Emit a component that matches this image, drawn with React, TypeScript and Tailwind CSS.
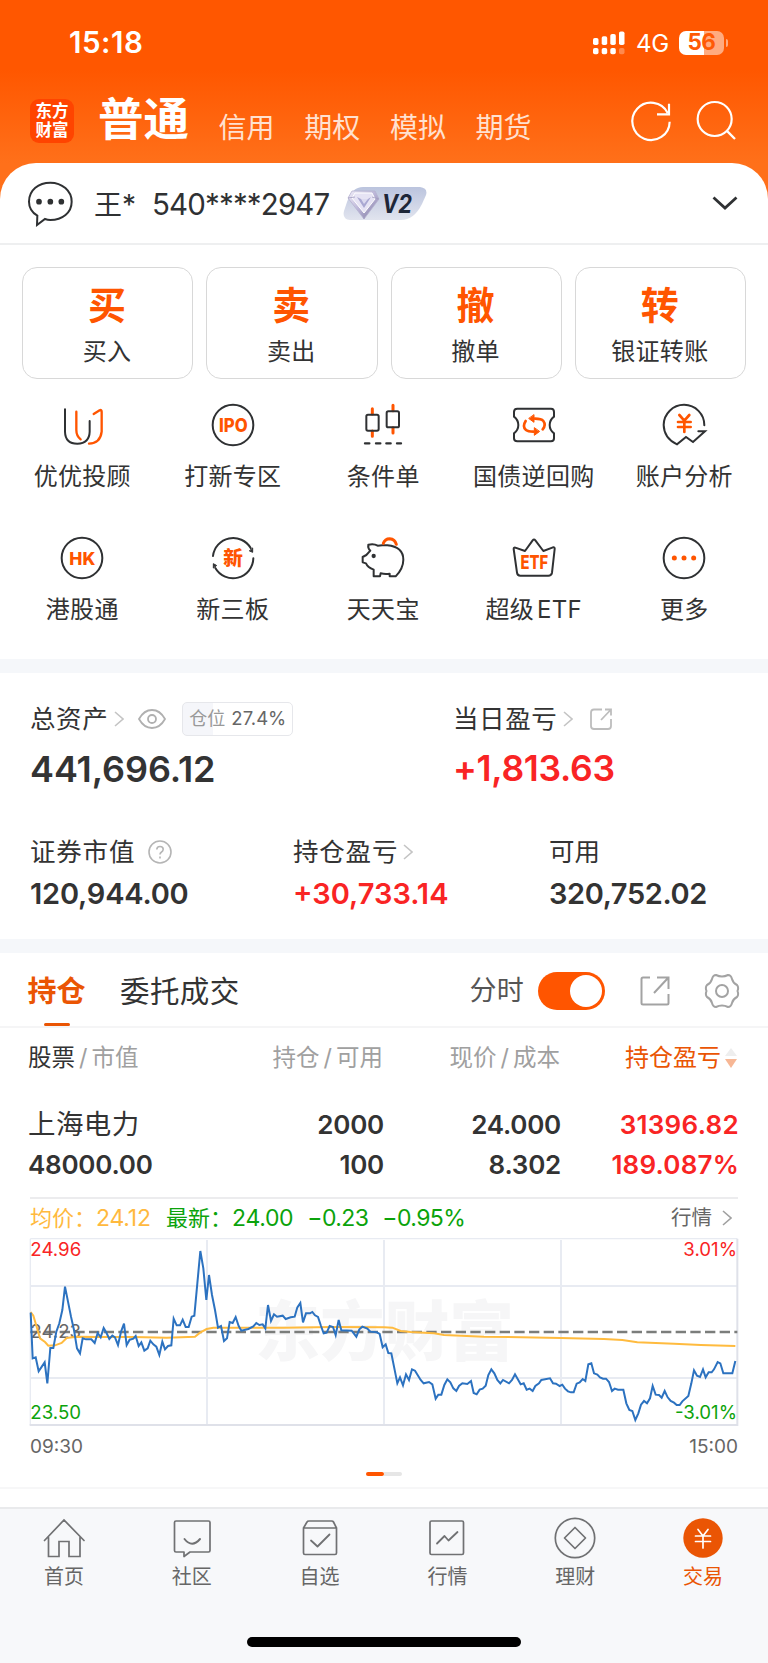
import React from "react";

const DARK = "#2f3133";
const ORANGE = "#ff5500";

type IconProps = { box: string; size?: string; children: React.ReactNode };

function Icon({ box, size = "size-12", children }: IconProps) {
  return (
    <svg
      viewBox={box}
      className={`${size} shrink-0`}
      fill="none"
      strokeLinecap="round"
      strokeLinejoin="round"
    >
      {children}
    </svg>
  );
}

function StatusBar() {
  return (
    <div className="flex h-[85px] items-center pl-[69px] pr-[40px] text-white">
      <span className="text-[29.5px] font-semibold leading-none tracking-[0.5px]">15:18</span>
      <div className="ml-auto flex items-center">
        <svg viewBox="0 0 32 24" className="h-6 w-8" fill="#fff">
          <rect x="0" y="7" width="5.5" height="7" rx="1.8" />
          <rect x="8.7" y="5.3" width="5.5" height="8.7" rx="1.8" />
          <rect x="17.3" y="3" width="5.5" height="11" rx="1.8" />
          <rect x="26" y="0.5" width="5.5" height="13.5" rx="1.8" />
          <rect x="0" y="17" width="5.5" height="6.3" rx="1.8" />
          <rect x="8.7" y="17" width="5.5" height="6.3" rx="1.8" />
          <rect x="17.3" y="17" width="5.5" height="6.3" rx="1.8" />
          <rect x="26" y="17" width="5.5" height="6.3" rx="1.8" opacity="0.3" />
        </svg>
        <span className="ml-[11px] w-[43px] pt-[2px] text-[24px] leading-none tracking-[-0.2px]">4G</span>
        <div className="flex h-6 w-[45px] items-center justify-center rounded-[7px] bg-[linear-gradient(90deg,#fff_56%,#ffab80_56%)]">
          <span className="text-[22.5px] font-bold leading-none tracking-[-0.4px] text-[#ff5a05]">56</span>
        </div>
        <div className="ml-[2px] h-[8px] w-[2px] rounded-r-full bg-[#ffab80]" />
      </div>
    </div>
  );
}

function HeaderTabs() {
  return (
    <div className="flex h-[78px] items-start pl-[30px] pr-[29px] text-white">
      <div className="mt-[14px] flex size-11 shrink-0 flex-col items-center justify-center gap-[2px] rounded-[9px] bg-[#ff4400] text-[16.5px] font-bold leading-none">
        <span className="block h-[17px]">东方</span>
        <span className="block h-[17px]">财富</span>
      </div>
      <div className="ml-[24px] mt-[12px] w-[120.5px] shrink-0 text-[45.5px] font-bold leading-none">普通</div>
      <div className="mt-[29px] flex gap-[29.7px] text-[28px] leading-none text-[#ffe1d0]">
        {["信用", "期权", "模拟", "期货"].map((t) => (
          <span key={t} className="shrink-0">
            {t}
          </span>
        ))}
      </div>
      <div className="ml-auto mt-[12px] flex gap-[16px]">
        <Icon box="730 290 144 144">
          <path
            d="M858 364A56 56 0 1 1 852 338M856 310V342H820"
            stroke="#fff"
            strokeWidth="6.5"
            strokeLinecap="butt"
            strokeLinejoin="miter"
          />
        </Icon>
        <Icon box="922 290 144 144">
          <circle cx="993" cy="356" r="51" stroke="#fff" strokeWidth="6.5" />
          <path d="M1029 391L1054 416" stroke="#fff" strokeWidth="7" strokeLinecap="butt" />
        </Icon>
      </div>
    </div>
  );
}

function AccountRow() {
  return (
    <div className="flex h-[82px] items-center border-b-2 border-[#eeeff0] pl-[26px] pr-[30px] text-[#2f3133]">
      <Icon box="78 537 144 144">
        <path
          d="M112 647Q87 632 87 605C87 570 116 548 151 548S215 572 215 605S187 660 151 660Q143 660 135 657L111 675Z"
          stroke={DARK}
          strokeWidth="6"
          strokeLinejoin="miter"
        />
        <g fill={DARK}>
          <circle cx="117" cy="605" r="8.5" />
          <circle cx="151" cy="605" r="8.5" />
          <circle cx="184" cy="605" r="8.5" />
        </g>
      </Icon>
      <span className="ml-[20px] w-[58px] pt-[4px] text-[28px] leading-none">王*</span>
      <span className="w-[191px] whitespace-nowrap pt-[3px] text-[29.5px] leading-none tracking-[-0.85px]">
        540****2947
      </span>
      <svg viewBox="0 0 84 36" className="h-9 w-[84px]">
        <defs>
          <linearGradient id="badge" x1="0" y1="0" x2="0" y2="1">
            <stop offset="0" stopColor="#bbc4de" />
            <stop offset="1" stopColor="#e1e4ee" />
          </linearGradient>
          <linearGradient id="gem" x1="0" y1="0" x2="1" y2="1">
            <stop offset="0" stopColor="#f2effa" />
            <stop offset="0.5" stopColor="#b9b3d6" />
            <stop offset="1" stopColor="#7c779c" />
          </linearGradient>
        </defs>
        <path
          d="M20 2H77Q85 3 83 10L79 19Q71 35 58 35H7Q-1 34 1 26L4 17Q9 2 20 2Z"
          fill="url(#badge)"
        />
        <path d="M9 6H32L36 14L21 34L5 13Z" fill="url(#gem)" stroke="#b5b1cf" strokeWidth="0.8" />
        <path d="M12 8H29L32 14L21 28L9 13Z" fill="#e6e3f4" stroke="#fff" strokeWidth="1" />
        <path d="M14 12L18 14H25L28 12L21 23Z" fill="#aaa8d2" />
        <path d="M18 14H25L21 19Z" fill="#dcdaf0" />
        <path d="M5 13L12 12M29 12L36 14M21 28V34" stroke="#a19cbf" strokeWidth="0.8" />
        <text
          x="39"
          y="27.5"
          fontFamily="Inter, sans-serif"
          fontSize="25"
          fontWeight="700"
          fontStyle="italic"
          fill="#1e2638"
          textLength="30"
          lengthAdjust="spacingAndGlyphs"
        >
          V2
        </text>
      </svg>
      <svg viewBox="0 0 26 14" className="ml-auto h-[14px] w-[26px]" fill="none">
        <path d="M1.5 1.5L13 12L24.5 1.5" stroke={DARK} strokeWidth="2.8" />
      </svg>
    </div>
  );
}

const actions = [
  ["买", "买入"],
  ["卖", "卖出"],
  ["撤", "撤单"],
  ["转", "银证转账"],
];

function ActionCards() {
  return (
    <div className="grid grid-cols-4 gap-[13px] px-[22px] pt-[22px]">
      {actions.map(([big, label]) => (
        <div
          key={big}
          className="flex h-[112px] flex-col items-center rounded-[15px] border border-[#d8d8d8] pr-px pt-[18px]"
        >
          <span className="text-[38px] font-bold leading-none text-[#ff5500]">{big}</span>
          <span className="mt-[16px] text-[24px] leading-none tracking-[0.3px] text-[#333]">{label}</span>
        </div>
      ))}
    </div>
  );
}

const iconText = {
  fill: ORANGE,
  fontFamily: "Inter, 'Noto Sans CJK SC', sans-serif",
  fontWeight: 800,
  textAnchor: "middle" as const,
};

const shortcuts = [
  {
    label: "优优投顾",
    icon: (
      <Icon box="177 453 144 144">
        <path d="M198 478V545Q199 581 235 581Q271 580 272 545V513" stroke={DARK} strokeWidth="6" />
        <path d="M232 485V540Q232 558 245 568" stroke={ORANGE} strokeWidth="7" />
        <path d="M284 492L302 481Q308 478 308 485V545Q304 580 270 581" stroke={ORANGE} strokeWidth="7" />
      </Icon>
    ),
  },
  {
    label: "打新专区",
    icon: (
      <Icon box="629 453 144 144">
        <circle cx="701" cy="525" r="61" stroke={DARK} strokeWidth="6" />
        <text x="702" y="545" fontSize="56" textLength="86" lengthAdjust="spacingAndGlyphs" {...iconText}>
          IPO
        </text>
      </Icon>
    ),
  },
  {
    label: "条件单",
    icon: (
      <Icon box="1080 453 144 144">
        <path d="M1120 476V492M1120 543V559M1182 466V482M1182 533V549" stroke={ORANGE} strokeWidth="9" />
        <rect x="1102" y="494" width="37" height="48" rx="5" stroke={DARK} strokeWidth="6" />
        <rect x="1163" y="484" width="37" height="48" rx="5" stroke={DARK} strokeWidth="6" />
        <path d="M1098 580H1111M1131 580H1144M1162 580H1175M1194 580H1206" stroke={DARK} strokeWidth="7" />
      </Icon>
    ),
  },
  {
    label: "国债逆回购",
    icon: (
      <Icon box="380 453 144 144">
        <path
          d="M402 476H503Q512 476 512 486V500Q499 510 499 525Q499 540 512 550V565Q512 574 503 574H402Q392 574 392 565V550Q405 540 405 525Q405 510 392 500V486Q392 476 402 476Z"
          stroke={DARK}
          strokeWidth="6"
        />
        <path d="M427 513Q416 530 428 540Q434 545 450 545M478 538Q489 525 480 513Q474 506 455 506" stroke={ORANGE} strokeWidth="8" />
        <path d="M453 534V556L468 545ZM452 495V517L437 506Z" fill={ORANGE} stroke={ORANGE} strokeWidth="3" />
      </Icon>
    ),
  },
  {
    label: "账户分析",
    icon: (
      <Icon box="831 453 144 144">
        <path
          d="M964 526A61 61 0 0 0 842 525Q843 565 882 583L909 561L930 576L966 544H946"
          stroke={DARK}
          strokeWidth="6"
          strokeLinejoin="miter"
        />
        <path d="M889 495L904 512L919 495M904 512V546M885 516H923M885 531H923" stroke={ORANGE} strokeWidth="8" />
      </Icon>
    ),
  },
  {
    label: "港股通",
    icon: (
      <Icon box="177 103 144 144">
        <circle cx="249" cy="175" r="61" stroke={DARK} strokeWidth="6" />
        <text x="250" y="196" fontSize="54" textLength="78" lengthAdjust="spacingAndGlyphs" {...iconText}>
          HK
        </text>
      </Icon>
    ),
  },
  {
    label: "新三板",
    icon: (
      <Icon box="629 103 144 144">
        <path d="M641 169A61 61 0 0 1 754 145M762 176A61 61 0 0 1 648 205" stroke={DARK} strokeWidth="6" />
        <path d="M760 146V158L751 154ZM642 204V192L651 197Z" fill={DARK} stroke={DARK} strokeWidth="3" />
        <text x="701" y="197" fontSize="59" {...iconText}>
          新
        </text>
      </Icon>
    ),
  },
  {
    label: "天天宝",
    icon: (
      <Icon box="1080 103 144 144">
        <path
          d="M1108 135Q1125 131 1136 138L1150 137H1165Q1213 142 1213 180Q1213 206 1190 230H1172V222Q1158 224 1145 221L1143 230H1124V210Q1106 203 1101 191L1091 188V172L1102 166L1114 153Q1106 146 1108 135Z"
          stroke={DARK}
          strokeWidth="6"
        />
        <circle cx="1124" cy="169" r="6.5" fill={DARK} />
        <path d="M1153 131Q1158 117 1172 117Q1188 118 1192 134" stroke={ORANGE} strokeWidth="9" />
      </Icon>
    ),
  },
  {
    label: "超级 ETF",
    icon: (
      <Icon box="380 103 144 144">
        <path
          d="M396 144L425 154L448 122Q452 117 456 122L480 154L509 143Q515 142 514 148L506 219Q504 228 495 228H411Q402 228 401 219L391 148Q391 143 396 144Z"
          stroke={DARK}
          strokeWidth="6"
        />
        <text x="453" y="207" fontSize="56" textLength="83" lengthAdjust="spacingAndGlyphs" {...iconText}>
          ETF
        </text>
      </Icon>
    ),
  },
  {
    label: "更多",
    icon: (
      <Icon box="831 103 144 144">
        <circle cx="903" cy="175" r="61" stroke={DARK} strokeWidth="6" />
        <g fill={ORANGE}>
          <circle cx="874" cy="175" r="7.5" />
          <circle cx="903" cy="175" r="7.5" />
          <circle cx="932" cy="175" r="7.5" />
        </g>
      </Icon>
    ),
  },
];

function Shortcuts() {
  return (
    <div className="grid h-[280px] auto-rows-[133px] grid-cols-5 pl-[7px] pr-[8.5px] pt-[22px]">
      {shortcuts.map((s) => (
        <div key={s.label} className="flex flex-col items-center">
          {s.icon}
          <span className="mt-[16px] whitespace-nowrap text-[24px] leading-none tracking-[0.3px] text-[#333] [word-spacing:-4px]">
            {s.label}
          </span>
        </div>
      ))}
    </div>
  );
}

function Arrow({ color = "#c4c4c4" }: { color?: string }) {
  return (
    <svg viewBox="0 0 10 16" className="h-4 w-[10px] shrink-0" fill="none">
      <path d="M1 1L9 8L1 15" stroke={color} strokeWidth="1.6" />
    </svg>
  );
}

function Assets() {
  return (
    <div className="h-[266px] pl-[30px] pt-[28px] text-[#333]">
      <div className="flex">
        <div className="w-[423px]">
          <div className="flex h-[35px] items-center">
            <span className="text-[25.5px] leading-none tracking-[0.6px]">总资产</span>
            <span className="ml-[6px] flex">
              <Arrow />
            </span>
            <svg viewBox="0 0 28 20" className="ml-[14px] h-5 w-7" fill="none" stroke="#b0b0b0" strokeWidth="1.8">
              <path d="M1 10Q6 1 14 1T27 10Q22 19 14 19T1 10Z" />
              <circle cx="14" cy="10" r="4" />
            </svg>
            <div className="ml-[16px] flex h-[34px] w-[111px] items-center justify-center rounded-[5px] border border-[#e6e7eb] bg-[linear-gradient(90deg,#f5f6fa_27.4%,#fff_27.4%)] leading-none">
              <span className="text-[18px] text-[#999]">仓位</span>
              <span className="ml-[6px] text-[18.5px] text-[#666]">27.4%</span>
            </div>
          </div>
          <div className="mt-[15px] text-[36px] font-semibold leading-[36px] tracking-[-0.1px]">441,696.12</div>
        </div>
        <div>
          <div className="flex h-[35px] items-center">
            <span className="text-[25.5px] leading-none tracking-[0.6px]">当日盈亏</span>
            <span className="ml-[6px] flex">
              <Arrow />
            </span>
            <svg
              viewBox="0 0 22 22"
              className="ml-[17px] size-[22px]"
              fill="none"
              stroke="#bdbdbd"
              strokeWidth="1.8"
            >
              <path d="M12 1.5H4Q1 1.5 1 4.5V18Q1 21 4 21H18Q21 21 21 18V11M11 12L21 1.5M15 1.5H21V7.5" />
            </svg>
          </div>
          <div className="mt-[15px] text-[35.5px] font-semibold leading-[36px] tracking-[-0.3px] text-[#f92424]">
            +1,813.63
          </div>
        </div>
      </div>
      <div className="mt-[49px] flex">
        <div className="w-[263px]">
          <div className="flex h-[32px] items-center">
            <span className="text-[25.5px] leading-none tracking-[0.8px]">证券市值</span>
            <svg viewBox="0 0 24 24" className="ml-[13px] size-6" fill="none" stroke="#b5b5b5" strokeWidth="1.6">
              <circle cx="12" cy="12" r="11" />
              <path d="M8.8 9.5Q8.8 6.5 12 6.5T15.2 9.3Q15.2 11 13.3 12.2Q12 13 12 14.5M12 16.6V18.4" />
            </svg>
          </div>
          <div className="mt-[11px] text-[29px] font-semibold leading-[30px] tracking-[-0.2px]">120,944.00</div>
        </div>
        <div className="w-[256px]">
          <div className="flex h-[32px] items-center">
            <span className="text-[25.5px] leading-none tracking-[0.8px]">持仓盈亏</span>
            <span className="ml-[5px] flex">
              <Arrow />
            </span>
          </div>
          <div className="mt-[11px] text-[29px] font-semibold leading-[30px] text-[#f92424]">+30,733.14</div>
        </div>
        <div>
          <div className="flex h-[32px] items-center text-[25.5px] leading-none">可用</div>
          <div className="mt-[11px] text-[29px] font-semibold leading-[30px] tracking-[-0.4px]">320,752.02</div>
        </div>
      </div>
    </div>
  );
}

function PositionTabs() {
  return (
    <div className="flex h-[75px] border-b-2 border-[#f5f5f6] pl-[27px] pr-[28.5px]">
      <div className="flex w-[59px] flex-col items-center pt-[24px]">
        <span className="text-[29px] font-bold leading-none text-[#ea5504]">持仓</span>
        <span className="mt-[16.5px] h-[5px] w-[26px] rounded-[2px] bg-[#ea5504]" />
      </div>
      <span className="ml-[34px] pt-[24px] text-[29.5px] leading-none tracking-[0.4px] text-[#333]">委托成交</span>
      <div className="ml-auto flex h-[75px] items-center">
        <span className="text-[27px] leading-none tracking-[0.2px] text-[#555]">分时</span>
        <div className="ml-[14px] flex h-[38px] w-[67px] items-center justify-end rounded-full bg-[#ff5500] pr-[3px]">
          <div className="size-[32px] rounded-full bg-white" />
        </div>
        <svg viewBox="0 0 30 30" className="ml-[35px] size-[30px]" fill="none" stroke="#a3a3a3" strokeWidth="2">
          <path d="M10 1.5H3Q1.5 1.5 1.5 3V27Q1.5 28.5 3 28.5H27Q28.5 28.5 28.5 27V18M14 17L28 2M17 1.5H28.5V13" />
        </svg>
        <svg
          viewBox="0 0 36 36"
          className="ml-[33.5px] size-[36px]"
          fill="none"
          stroke="#a3a3a3"
          strokeWidth="2"
          strokeLinejoin="round"
        >
          <path d="M12 2Q18 5 24 2Q27 2 28 6Q29 10 33 12Q35 14 33.5 18Q35 22 33 24Q29 26 28 30Q27 34 24 34Q18 31 12 34Q9 34 8 30Q7 26 3 24Q1 22 2.5 18Q1 14 3 12Q7 10 8 6Q9 2 12 2Z" />
          <circle cx="18" cy="18" r="6" />
        </svg>
      </div>
    </div>
  );
}

function Positions() {
  return (
    <div className="px-[28px]">
      <div className="grid h-[60px] grid-cols-[160px_195px_177px_1fr] items-center text-right text-[23.5px] leading-none text-[#a0a0a0]">
        <span className="text-left">
          <span className="text-[#333]">股票</span>
          <span className="px-[4px]">/</span>市值
        </span>
        <span>
          持仓<span className="px-[4px]">/</span>可用
        </span>
        <span>
          现价<span className="px-[4px]">/</span>成本
        </span>
        <span className="flex items-center justify-end text-[24px] text-[#ea5504]">
          持仓盈亏
          <svg viewBox="0 0 14 20" className="ml-[3px] mr-[2px] h-5 w-[14px]">
            <path d="M7 0L13 8H1Z" fill="#eeeeee" />
            <path d="M7 20L13 11H1Z" fill="#f7b795" />
          </svg>
        </span>
      </div>
      <div className="grid h-[109px] grid-cols-[160px_196px_177px_1fr] auto-rows-[40px] items-center pt-[17px] text-right text-[26px] font-semibold leading-none tracking-[-0.25px] text-[#333]">
        <span className="text-left text-[27.5px] font-normal tracking-[0.4px]">上海电力</span>
        <span>2000</span>
        <span>24.000</span>
        <span className="pr-px tracking-[0.3px] text-[#f92424]">31396.82</span>
        <span className="text-left">48000.00</span>
        <span>100</span>
        <span>8.302</span>
        <span className="pr-px tracking-[0.2px] text-[#f92424]">189.087%</span>
      </div>
    </div>
  );
}

const priceLine =
  "92,368 98,505 107,502 116,544 134,517 142,580 151,474 160,474 169,425 178,400 187,360 195,290 204,335 213,380 222,420 231,475 240,490 248,445 258,448 274,448 284,459 293,429 302,442 311,414 320,430 328,447 337,437 345,442 354,465 363,425 372,401 380,465 389,449 400,446 407,438 416,468 424,457 433,482 443,475 451,452 460,463 469,470 478,495 487,455 495,478 504,468 514,466 521,386 530,406 540,406 548,389 557,411 566,411 575,380 583,377 592,280 601,183 610,235 619,330 627,255 636,315 645,360 654,413 663,408 672,453 681,445 689,396 698,399 707,381 716,408 724,422 745,417 760,409 769,399 778,405 788,403 796,415 804,345 813,393 822,373 831,380 848,377 857,387 872,382 884,380 892,352 901,339 909,397 918,370 930,370 937,366 945,376 954,381 963,408 971,430 980,428 989,408 999,411 1007,435 1016,390 1024,421 1055,422 1069,440 1078,418 1087,410 1102,416 1111,425 1130,427 1139,432 1148,472 1157,463 1165,489 1174,490 1182,530 1192,580 1200,562 1209,586 1218,553 1227,570 1236,538 1245,542 1262,570 1271,580 1287,576 1297,583 1307,626 1315,614 1324,614 1333,585 1342,568 1351,577 1360,595 1369,603 1377,588 1387,580 1402,582 1413,573 1421,609 1430,613 1439,599 1448,596 1457,587 1465,555 1474,538 1483,550 1492,570 1501,580 1509,570 1527,580 1536,570 1545,553 1562,583 1571,580 1580,599 1589,596 1598,603 1606,588 1617,580 1624,570 1650,565 1659,580 1668,581 1679,588 1687,584 1695,596 1704,604 1713,607 1721,607 1730,581 1739,577 1748,567 1756,573 1765,523 1774,520 1782,550 1792,554 1800,562 1809,566 1818,566 1827,576 1836,603 1844,596 1854,599 1870,599 1879,640 1888,660 1897,663 1906,690 1915,670 1923,644 1932,633 1941,640 1950,625 1958,588 1967,614 1977,615 1985,623 1994,603 2003,622 2012,633 2022,638 2030,645 2039,645 2047,634 2065,618 2074,580 2082,541 2091,557 2100,561 2109,538 2117,562 2126,547 2135,547 2142,538 2153,516 2161,520 2170,550 2197,550 2206,513";

const averageLine =
  "92,366 100,377 110,410 120,445 135,456 145,467 165,466 185,459 200,444 230,440 300,441 400,441 500,443 585,440 600,428 620,417 640,413 700,413 850,413 1000,411 1152,412 1177,413 1202,423 1232,426 1302,430 1332,435 1452,440 1682,444 1812,447 1867,450 1912,457 2022,461 2102,465 2206,468";

function IntradayChart() {
  return (
    <div className="flex h-[290px] flex-col px-[28px]">
      <div className="mx-[2px] flex h-[40px] items-center border-t-2 border-[#ececee] text-[23px] leading-none tracking-[-0.6px]">
        <span className="w-[136px] text-[#ffb93e]">
          <span className="text-[22px] tracking-normal">均价：</span>
          <span className="tracking-[-0.2px]">24.12</span>
        </span>
        <span className="text-[#0ba30b]">
          <span className="text-[22px] tracking-normal">最新：</span>
          <span className="tracking-[-0.3px]">24.00</span>
        </span>
        <span className="ml-[14px] text-[#0ba30b]">−0.23</span>
        <span className="ml-[14px] text-[#0ba30b]">−0.95%</span>
        <span className="ml-auto mr-[10px] text-[20.5px] tracking-normal text-[#666]">行情</span>
        <span className="mr-[6px] flex">
          <Arrow color="#a0a0a0" />
        </span>
      </div>
      <svg
        viewBox="84 141 2136 573"
        className="h-[191px] w-[712px] shrink-0"
        fill="none"
        fontFamily="Inter, 'Noto Sans CJK SC', sans-serif"
        fontSize="56"
      >
        <text x="766" y="496" fontSize="194" fontWeight="900" fill="#f6f6f7">
          东方财富
        </text>
        <g stroke="#e8ebf2" strokeWidth="6">
          <path d="M91 288H2212M91 564H2212M621 150V704M1152 150V704M1683 150V704" />
          <path d="M91 146V705M91 146H2212" strokeWidth="4" />
          <path d="M2212 146V705H89" stroke="#dfe1e9" />
        </g>
        <path d="M91 426H2212" stroke="#7b7d7b" strokeWidth="7" strokeDasharray="31 13" />
        <text x="91" y="444" fill="#666">
          24.23
        </text>
        <polyline points={averageLine} stroke="#ffbb3f" strokeWidth="6" />
        <polyline points={priceLine} stroke="#2c72c0" strokeWidth="6" />
        <text x="91" y="199" fill="#f92424">
          24.96
        </text>
        <text x="91" y="687" fill="#0ba30b">
          23.50
        </text>
        <text x="2211" y="199" textAnchor="end" fill="#f92424">
          3.01%
        </text>
        <text x="2211" y="687" textAnchor="end" fill="#0ba30b">
          -3.01%
        </text>
      </svg>
      <div className="mx-[2px] flex h-[37px] items-center justify-between text-[19px] leading-none text-[#666]">
        <span>09:30</span>
        <span>15:00</span>
      </div>
      <div className="mt-[7px] flex justify-center">
        <span className="h-[4px] w-[18px] rounded-full bg-[#ff5500]" />
        <span className="h-[4px] w-[18px] rounded-r-full bg-[#e6e6e6]" />
      </div>
    </div>
  );
}

const navIcon = "#707173";

const navItems = [
  {
    label: "首页",
    icon: (
      <Icon box="40 1513.5 48 48">
        <path
          d="M44.5 1540L64 1519.5L84 1540M48.5 1537V1556H59V1541H69V1556H80V1537"
          stroke={navIcon}
          strokeWidth="1.7"
          strokeLinejoin="miter"
        />
      </Icon>
    ),
  },
  {
    label: "社区",
    icon: (
      <Icon box="168 1513.5 48 48">
        <path
          d="M176 1520.5H208.5Q210 1520.5 210 1522V1550Q210 1551.5 208.5 1551.5H190L184 1556V1551.5H176Q174.5 1551.5 174.5 1550V1522Q174.5 1520.5 176 1520.5Z"
          stroke={navIcon}
          strokeWidth="1.7"
        />
        <path d="M184.5 1538.5Q192 1548 200 1538.5" stroke={navIcon} strokeWidth="2" />
      </Icon>
    ),
  },
  {
    label: "自选",
    icon: (
      <Icon box="296 1513.5 48 48">
        <path
          d="M303.5 1527.5L307 1521.5Q307.5 1520.5 309 1520.5H331.5Q333 1520.5 333.5 1521.5L336.5 1527.5M303.5 1527.5H336.5V1552.5Q336.5 1554 335 1554H305Q303.5 1554 303.5 1552.5Z"
          stroke={navIcon}
          strokeWidth="1.7"
        />
        <path d="M311 1540L317.5 1546L329.5 1534" stroke={navIcon} strokeWidth="1.8" />
      </Icon>
    ),
  },
  {
    label: "行情",
    icon: (
      <Icon box="424 1513.5 48 48">
        <rect x="431" y="1520.5" width="33.5" height="33.5" rx="1.5" stroke={navIcon} strokeWidth="1.7" />
        <path d="M438 1543L445.5 1535.5L449.5 1540L458.5 1531.5" stroke={navIcon} strokeWidth="1.8" />
      </Icon>
    ),
  },
  {
    label: "理财",
    icon: (
      <Icon box="552 1513.5 48 48">
        <circle cx="576" cy="1537.5" r="19.7" stroke={navIcon} strokeWidth="1.7" />
        <path d="M576 1527L586.5 1537.5L576 1548L565.5 1537.5Z" stroke={navIcon} strokeWidth="1.7" />
      </Icon>
    ),
  },
  {
    label: "交易",
    active: true,
    icon: (
      <Icon box="680 1513.5 48 48">
        <circle cx="704" cy="1537.5" r="19.7" fill="#ea5504" />
        <path
          d="M699 1529L704 1535.5L709 1529M704 1535.5V1547.5M696.5 1535.5H711.5M696.5 1541H711.5"
          stroke="#fff"
          strokeWidth="1.7"
        />
      </Icon>
    ),
  },
];

function BottomNav() {
  return (
    <div className="flex h-[156px] flex-col border-t-2 border-[#e9eaec] bg-[#f7f8fa]">
      <div className="grid grid-cols-6 pr-px pt-[5px]">
        {navItems.map((n) => (
          <div key={n.label} className="flex flex-col items-center">
            {n.icon}
            <span
              className={`mt-[5px] text-[20px] leading-none ${n.active ? "text-[#ea5504]" : "text-[#666]"}`}
            >
              {n.label}
            </span>
          </div>
        ))}
      </div>
      <div className="mx-auto mb-[16px] mt-auto h-[10px] w-[274px] rounded-full bg-black" />
    </div>
  );
}

export default function App() {
  return (
    <div className="h-[1663px] w-[768px] overflow-hidden bg-[linear-gradient(180deg,#ff5700_70px,#ff701a_163px)] font-[Inter,'Noto_Sans_CJK_SC',sans-serif]">
      <StatusBar />
      <HeaderTabs />
      <div className="h-[1500px] rounded-t-[36px] bg-white">
        <AccountRow />
        <ActionCards />
        <Shortcuts />
        <div className="h-[14px] bg-[#f5f7fa]" />
        <Assets />
        <div className="h-[14px] bg-[#f5f7fa]" />
        <PositionTabs />
        <Positions />
        <div className="h-[310px]">
          <IntradayChart />
          <div className="h-[2px] bg-[#f7f7f8]" />
        </div>
        <BottomNav />
      </div>
    </div>
  );
}
